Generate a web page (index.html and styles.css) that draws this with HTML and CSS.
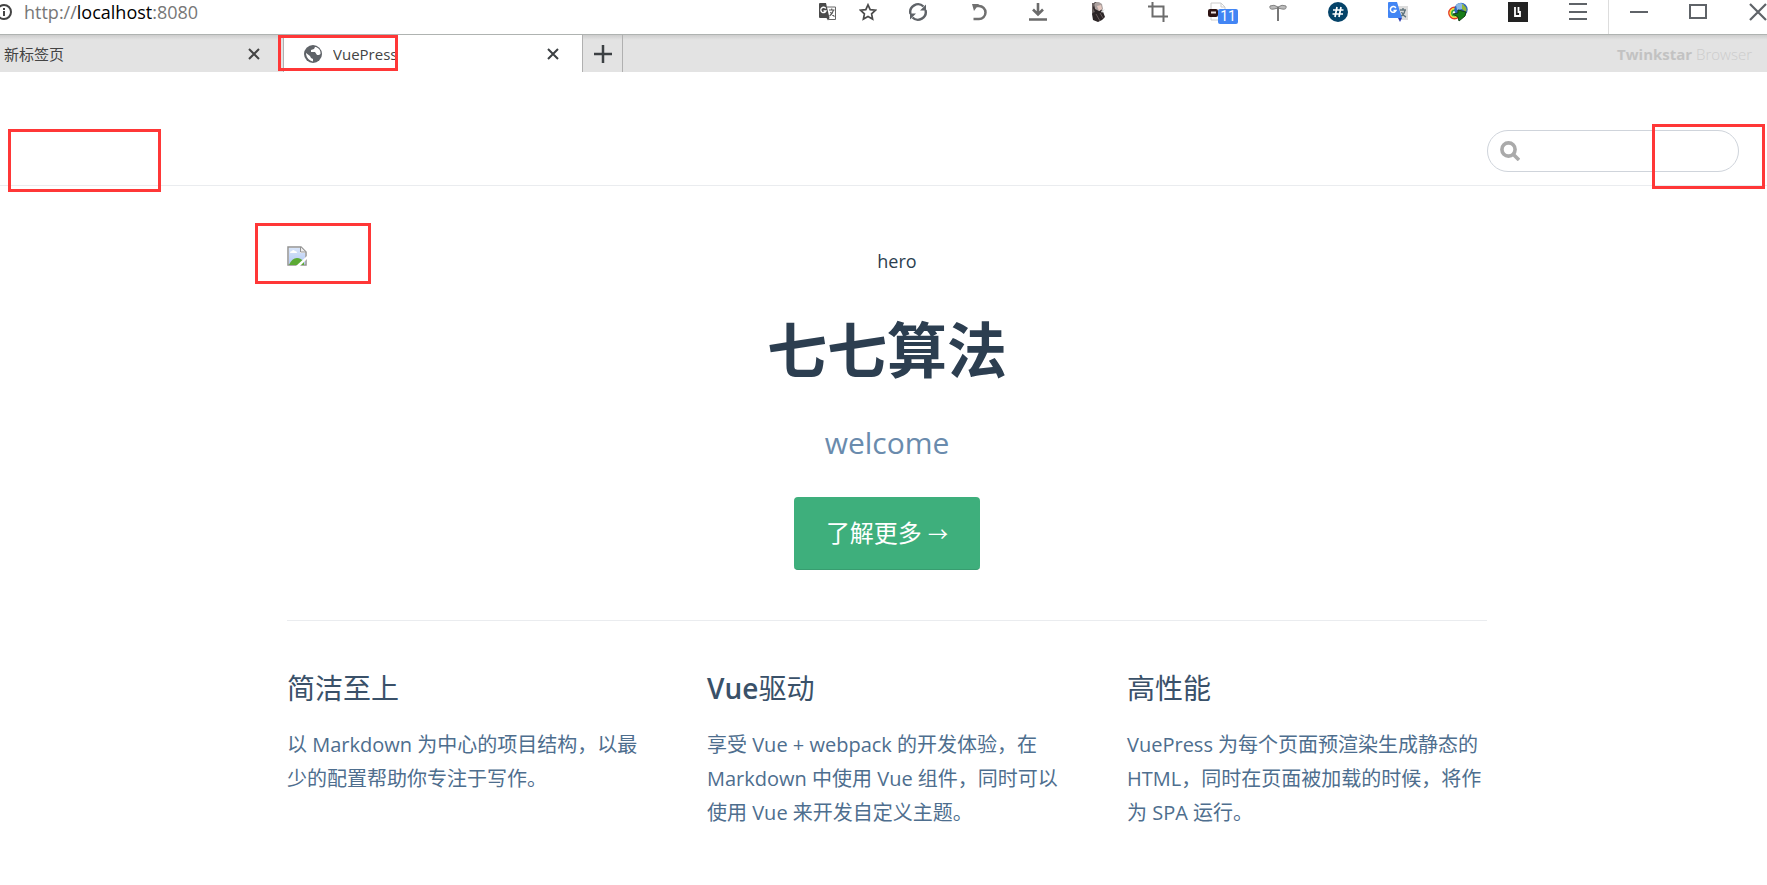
FILE: index.html
```html
<!DOCTYPE html>
<html lang="zh-CN">
<head>
<meta charset="utf-8">
<meta name="viewport" content="width=device-width, initial-scale=1">
<title>VuePress</title>
<link rel="stylesheet" href="styles.css">
</head>
<body>
<div class="toolbar">
  <div class="address">
    <svg class="info" width="16" height="16" viewBox="0 0 16 16"><circle cx="8" cy="8" r="7" fill="none" stroke="#444" stroke-width="2"/><path d="M8 7v5M8 4v2" stroke="#444" stroke-width="2"/></svg>
    <span class="url">http://<b>localhost</b>:8080</span>
  </div>
  <button class="tool narrow" aria-label="Translate page"><svg width="18" height="18" viewBox="0 0 18 18"><path d="M8 4h8.500v12.500H9.500" fill="#fff" stroke="#666"/><path d="M1 0h6l3.500 15H1q-1 0-1-1V1q0-1 1-1z" fill="#4a4a4a"/><path d="M7.500 15h3l-1.500 2.500z" fill="#4a4a4a"/><path d="M6.800 5.500A2.700 2.700 0 1 0 7 8H4.500" fill="none" stroke="#fff" stroke-width="1.300"/><path d="M10 7h5.500M12.700 5.500V7M14.500 7q-1 4-4 6M11.500 9q1 3 4 4.500" fill="none" stroke="#555" stroke-width="1.100"/></svg></button>
  <button class="tool narrow" aria-label="Bookmark"><svg width="18" height="18" viewBox="0 0 18 18"><path d="M9 1.800l2.200 4.800 5.300.6-3.900 3.600 1 5.200L9 13.400 4.400 16l1-5.200L1.500 7.200l5.300-.6z" fill="none" stroke="#4b4b4b" stroke-width="1.700"/></svg></button>
  <button class="tool" aria-label="Reload"><svg width="20" height="20" viewBox="0 0 20 20"><path d="M2.500 12A7.800 7.800 0 0 1 15.500 4.500M17.500 8A7.800 7.800 0 0 1 4.500 15.500" fill="none" stroke="#5f6368" stroke-width="2.400"/><path d="M18 2.500v6h-6zM2 17.500v-6h6z" fill="#5f6368"/></svg></button>
  <button class="tool" aria-label="Undo"><svg width="20" height="20" viewBox="0 0 20 20"><path d="M7 4h4a6.500 6.500 0 0 1 0 13H5.500" fill="none" stroke="#707070" stroke-width="2.500"/><path d="M4 2h7L6 9z" fill="#707070"/></svg></button>
  <button class="tool" aria-label="Downloads"><svg width="20" height="20" viewBox="0 0 20 20"><path d="M10 1v11M5 7.500l5 5 5-5M1 17.500h18" fill="none" stroke="#6b6b6b" stroke-width="2.600"/></svg></button>
  <button class="tool" aria-label="Profile"><svg width="20" height="22" viewBox="0 0 20 22"><path d="M4 4l3-3 5 1 2 6 3 8-3 3-4 2-5-2-1-6 1-4z" fill="#2b2526"/><path d="M6 3q3-4 8 0l1 5-4 2-4-2z" fill="#aaa09e"/><path d="M9 5l4-1 1 4-3 2z" fill="#e4c8c0"/><path d="M4 2h3L5 7l2 4-3 1z" fill="#6a6261"/><path d="M13 10l4-2-3 4z" fill="#ddd"/><path d="M8 13l4 7M12 12l3 5" stroke="#66595a"/></svg></button>
  <button class="tool" aria-label="Screenshot"><svg width="20" height="20" viewBox="0 0 20 20"><path d="M4.500 0v14.500H20M0 4.500h15.500V20" fill="none" stroke="#6c6c6c" stroke-width="2"/></svg></button>
  <button class="tool ext" aria-label="Extension, 11 items"><svg width="20" height="20" viewBox="0 0 20 20"><path d="M3 1h10l4 4v13H3z" fill="#fff" stroke="#ccc"/><path d="M13 1v4h4" fill="none" stroke="#ccc"/><rect x="0" y="7" width="10" height="8" rx="2" fill="#2c1212"/><path d="M3 10.500h5" stroke="#eadede" stroke-width="2"/></svg><span class="count">11</span></button>
  <button class="tool" aria-label="Dragonfly extension"><svg width="18" height="18" viewBox="0 0 18 18"><path d="M9 4Q5 1 1 3q-1 4 4 3l4-1 4 1q5 1 4-3-4-2-8 1z" fill="#bbb" stroke="#858585"/><path d="M9 4v14" stroke="#777" stroke-width="2"/></svg></button>
  <button class="tool" aria-label="Hash extension"><svg width="20" height="20" viewBox="0 0 20 20"><circle cx="10" cy="10" r="10" fill="#054369"/><path d="M9 5L7 15M13 5l-2 10M5 8h10.500M4.500 12H15" stroke="#fff" stroke-width="1.700"/></svg></button>
  <button class="tool" aria-label="Google Translate"><svg width="20" height="20" viewBox="0 0 20 20"><path d="M9 4h11v14H12z" fill="#dcdcdc"/><path d="M12 8h6M15 6v2M17 8q-1 5-4 6M13.500 10q2 4 4.500 5" stroke="#60747d" stroke-width="1.400" fill="none"/><path d="M0 1q0-1 1-1h8l5 16H1q-1 0-1-1z" fill="#4285f4"/><path d="M10 16h4l-2 4z" fill="#3040b5"/><path d="M7.800 6A2.900 2.900 0 1 0 8 8.500H5.500" fill="none" stroke="#fff" stroke-width="1.500"/></svg></button>
  <button class="tool" aria-label="Download manager"><svg width="20" height="20" viewBox="0 0 20 20"><circle cx="6.500" cy="11" r="5.600" fill="none" stroke="#e63c28" stroke-width="1.600"/><circle cx="6.500" cy="11" r="4.200" fill="none" stroke="#f6df23" stroke-width="1.600"/><circle cx="6.500" cy="11" r="2.700" fill="none" stroke="#32aa32" stroke-width="1.600"/><circle cx="13" cy="7.500" r="6.700" fill="#2e66bc"/><path d="M8 3q4-4 8 0l-2 4-5 1z" fill="#8bb9e5"/><path d="M14 2q6 3 4 8l-4-3z" fill="#94b739"/><path d="M5 12l5-1V8l8 2-1 4-6 5-1-4z" fill="#167d18" stroke="#133f16"/></svg></button>
  <button class="tool" aria-label="Library extension"><svg width="20" height="20" viewBox="0 0 20 20"><path d="M0 0h20v20H0z" fill="#222"/><path d="M7 5v9h5V9M10.500 5v6" fill="none" stroke="#fff" stroke-width="1.800"/></svg></button>
  <button class="tool" aria-label="Menu"><svg width="18" height="20" viewBox="0 0 18 20"><path d="M0 2h18M0 10h18M0 17h18" stroke="#5f6368" stroke-width="2"/></svg></button>
  <button class="tool window-start" aria-label="Minimize"><svg width="18" height="18" viewBox="0 0 18 18"><path d="M0 9h18" stroke="#5f6368" stroke-width="2"/></svg></button>
  <button class="tool" aria-label="Maximize"><svg width="18" height="18" viewBox="0 0 18 18"><path d="M1 2h16v13H1z" fill="none" stroke="#5f6368" stroke-width="2"/></svg></button>
  <button class="tool close" aria-label="Close window"><svg width="18" height="18" viewBox="0 0 18 18"><path d="M1 1l16 16M17 1L1 17" stroke="#5f6368" stroke-width="2.200"/></svg></button>
</div>
<div class="tabs">
  <div class="tab"><span class="tab-title">新标签页</span><button class="tab-close" aria-label="关闭新标签页"><svg width="12" height="12" viewBox="0 0 12 12"><path d="M1 1l10 10M11 1L1 11" stroke="#444" stroke-width="2"/></svg></button></div>
  <div class="tab active">
    <svg width="18" height="18" viewBox="0 0 18 18"><circle cx="9" cy="9" r="9" fill="#5f6368"/><path d="M2 8l4 3 1 2 2 1v2.500Q3 15 2 9zM11 2l-1 2-3 1v2h4l2 3h2l1.500-1Q17 4 12 2z" fill="#fff"/></svg>
    <span class="tab-title">VuePress</span><button class="tab-close" aria-label="关闭 VuePress"><svg width="12" height="12" viewBox="0 0 12 12"><path d="M1 1l10 10M11 1L1 11" stroke="#3c4043" stroke-width="2"/></svg></button>
    <span class="mark mark-tab"></span>
  </div>
  <button class="new-tab" aria-label="新建标签页"><svg width="18" height="18" viewBox="0 0 18 18"><path d="M9 0v18M0 9h18" stroke="#3c4043" stroke-width="2.500"/></svg></button>
  <span class="brand"><b>Twinkstar</b> Browser</span>
</div>
<header class="navbar">
  <span class="mark mark-logo"></span>
  <label class="search">
    <svg width="20" height="20" viewBox="0 0 20 20"><circle cx="8.500" cy="8.500" r="6.600" fill="none" stroke="#aaa" stroke-width="3.600"/><path d="M13 13l6 6" stroke="#aaa" stroke-width="3.600"/></svg>
    <input type="text" aria-label="Search">
  </label>
  <span class="mark mark-search"></span>
</header>
<main class="home">
  <section class="hero">
    <div class="hero-image">
      <svg width="20" height="20" viewBox="0 0 20 20"><defs><linearGradient id="sky" x2="0" y2="1"><stop stop-color="#d8e5fa"/><stop offset="1" stop-color="#b4caf3"/></linearGradient></defs><path d="M1 1h13l5 5v13H1z" fill="#fff" stroke="#939393" stroke-width="1.500"/><path d="M2 2h11v5h5v11H2z" fill="url(#sky)"/><path d="M3 7q0-2 2-2 1-2 3 0 2 0 2 2z" fill="#fff"/><path d="M2 19q3-7 8-7 4 0 7 4v3z" fill="#5caa35"/><path d="M13.500 1V6h5" fill="#eee" stroke="#939393"/><path d="M20 10L9 20h4l7-7z" fill="#fff"/></svg>
      <span class="alt">hero</span>
      <span class="mark mark-image"></span>
    </div>
    <h1>七七算法</h1>
    <p class="tagline">welcome</p>
    <a class="action" href="#features">了解更多 <span class="arrow">→</span></a>
  </section>
  <section class="features" id="features">
    <article><h2>简洁至上</h2><p>以 Markdown 为中心的项目结构，以最少的配置帮助你专注于写作。</p></article>
    <article><h2><span class="latin">Vue</span>驱动</h2><p>享受 Vue + webpack 的开发体验，在 Markdown 中使用 Vue 组件，同时可以使用 Vue 来开发自定义主题。</p></article>
    <article><h2>高性能</h2><p>VuePress 为每个页面预渲染生成静态的 HTML，同时在页面被加载的时候，将作为 SPA 运行。</p></article>
  </section>
</main>
</body>
</html>
```
FILE: styles.css
```css
* { box-sizing: border-box; }
body {
  margin: 0;
  background: #fff;
  color: #2c3e50;
  font: 20px/34px "Open Sans", "Noto Sans CJK SC", sans-serif;
}
button { border: 0; padding: 0; background: none; font: inherit; }
svg { display: block; flex: none; }

.toolbar { display: flex; height: 34px; overflow: hidden; }
.address {
  display: flex;
  flex: 1;
  align-items: center;
  gap: 12px;
  min-width: 0;
  margin-left: -4px;
  padding-bottom: 11px;
}
.url { color: #777; font-size: 18px; line-height: 24px; }
.url b { color: #000; font-weight: 400; }
.tool {
  display: flex;
  flex: 0 0 60px;
  align-items: center;
  justify-content: center;
  padding-bottom: 10px;
}
.tool.narrow { flex-basis: 40px; }
.tool.window-start { border-left: 1px solid #ddd; }
.tool.close { flex-basis: 37px; justify-content: flex-start; padding-left: 21px; }
.ext { position: relative; }
.count {
  position: absolute;
  top: 9px;
  left: 30px;
  width: 20px;
  height: 15px;
  border-radius: 2px;
  background: #4285f4;
  color: #fff;
  font: 14px/15px Roboto, sans-serif;
}

.tabs {
  display: flex;
  height: 38px;
  border-top: 1px solid #afb3b1;
  background: linear-gradient(#cdcdcd, #e3e3e3 5px);
}
.tab {
  position: relative;
  display: flex;
  flex: 0 0 283px;
  align-items: center;
  padding: 0 23px 0 4px;
  color: #444;
  font-size: 15px;
  line-height: 20px;
}
.tab-close { margin-left: auto; }
.tab.active {
  flex-basis: 299px;
  padding: 0 23px 0 20px;
  border-left: 1px solid #b0b0b0;
  background: #fff;
}
.active .tab-title { width: 64px; margin-left: 11px; overflow: hidden; }
.new-tab {
  display: grid;
  flex: 0 0 41px;
  place-items: center;
  border: solid #b0b0b0;
  border-width: 0 1px;
}
.brand {
  margin: auto 15px auto auto;
  color: #ccc;
  font-size: 15px;
  line-height: 20px;
  font-weight: 300;
}
.brand b { color: #c2c2c2; font-weight: 700; }

.mark { position: absolute; z-index: 1; border: 3px solid #ff3737; pointer-events: none; }
.mark-tab { top: 0; left: -6px; width: 120px; height: 36px; }
.mark-logo { top: 57px; left: 8px; width: 153px; height: 63px; }
.mark-search { top: 52px; right: 2px; width: 113px; height: 65px; }
.mark-image { top: -23px; left: -32px; width: 116px; height: 61px; }

.navbar {
  position: relative;
  display: flex;
  justify-content: flex-end;
  padding: 58px 28px 13px;
  border-bottom: 1px solid #eaecef;
}
.search { position: relative; flex: 0 1 252px; }
.search svg { position: absolute; top: 11px; left: 13px; }
.search input {
  display: block;
  width: 100%;
  height: 42px;
  padding: 0 20px 0 40px;
  border: 1px solid #cfd4db;
  border-radius: 21px;
  background: #fff;
  color: #4e6e8e;
  font: inherit;
  outline: 0;
}

.home { max-width: 1207px; margin: 0 auto; padding: 60px 0 0 7px; }
.hero { text-align: center; }
.hero-image { position: relative; display: flex; }
.alt { flex: 1; font-size: 18px; line-height: 30px; }
h1 { margin: 38px 0 36px; font-size: 60px; line-height: 72px; font-weight: 700; }
.tagline { margin: 0 0 33px; color: #6a8bad; font-size: 30px; line-height: 42px; }
.action {
  display: inline-block;
  padding: 18px 32px;
  border-bottom: 1px solid #389d70;
  border-radius: 4px;
  background: #3eaf7c;
  color: #fff;
  font-size: 24px;
  line-height: 36px;
  text-decoration: none;
  vertical-align: top;
}
.arrow { font-size: 20px; line-height: 20px; }
.features {
  display: flex;
  justify-content: space-between;
  margin-top: 50px;
  padding: 49px 0;
  border-top: 1px solid #eaecef;
}
article { flex: 0 0 30%; }
h2 { margin: 0 0 22px; color: #3a5169; font-size: 28px; line-height: 36px; font-weight: 400; }
.latin { font-weight: 600; }
article p { margin: 0; color: #4e6e8e; }
```
